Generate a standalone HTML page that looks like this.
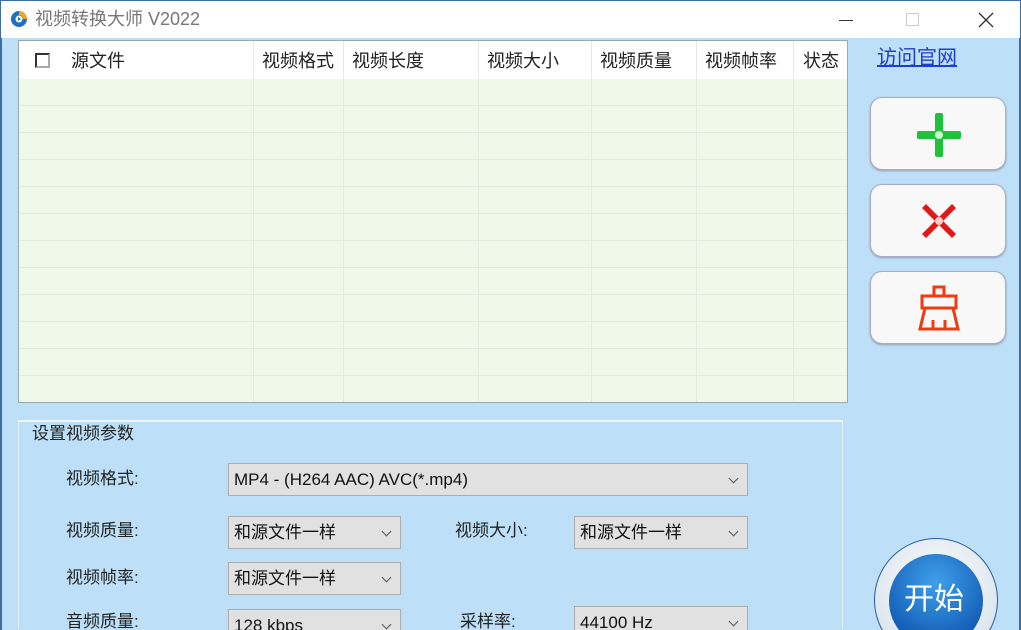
<!DOCTYPE html>
<html><head><meta charset="utf-8"><style>
*{margin:0;padding:0;box-sizing:border-box}
html,body{width:1021px;height:630px;overflow:hidden}
body{background:#bde0f8;font-family:"Liberation Sans","Noto Sans CJK SC",sans-serif;line-height:1.2}
#w{position:relative;width:1021px;height:630px;overflow:hidden}
.a{position:absolute}
.title{left:0;top:0;width:1021px;height:38px;background:#fff;border:1px solid #3a6ea5;border-bottom:none}
.title span{position:absolute;left:34px;top:7px;font-size:18px;color:#777;line-height:22px}
.tbl{left:18px;top:40px;width:830px;height:363px;background:#f0f8e9;border:1px solid #9aa;overflow:hidden}
.hdr{position:absolute;left:0;top:0;width:830px;height:38px;background:#fff;font-size:18px;color:#222;line-height:20px}
.hdr div{position:absolute;top:10px}
.vl{position:absolute;top:0;width:1px;height:363px;background:#e4ece0}
.hl{position:absolute;left:0;width:830px;height:1px;background:#e2ece0}
.btn{left:870px;width:136px;height:73px;background:#f8f8f8;border:1px solid #aac;border-radius:12px;box-shadow:0 1px 2px #99a}
.grp{left:18px;top:420px;width:825px;height:208px;border:1px solid #e6f2fc;border-top:2px solid #eef6fc;border-bottom:none}
.lbl{font-size:17px;color:#222;line-height:20px}
.sel{background:#e1e1e1;border:1px solid #adadad;font-size:17px;color:#111;padding:6px 0 0 5px;height:33px;line-height:20px}
.sel:after{content:"";position:absolute;right:10px;top:11px;width:6px;height:6px;border-right:1px solid #555;border-bottom:1px solid #555;transform:rotate(45deg)}
</style></head><body><div id="w">
<div class="a title">
<svg class="a" style="left:9px;top:9px" width="18" height="18" viewBox="0 0 18 18"><circle cx="9" cy="9" r="8" fill="#1e6fc0"/><path d="M9 1a8 8 0 0 1 8 8h-4a4 4 0 0 0-4-4z" fill="#f5a623"/><circle cx="9" cy="9" r="3.5" fill="#fff"/><path d="M8 7l3 2-3 2z" fill="#1e6fc0"/></svg>
<span>视频转换大师 V2022</span>
<div class="a" style="left:838px;top:19px;width:14px;height:1px;background:#333"></div>
<div class="a" style="left:905px;top:12px;width:13px;height:13px;border:1px solid #ccc"></div>
<svg class="a" style="left:977px;top:11px" width="16" height="16" viewBox="0 0 16 16"><path d="M1 1L15 15M15 1L1 15" stroke="#333" stroke-width="1.3"/></svg>
</div>
<div class="a" style="left:0;top:38px;width:2px;height:592px;background:#3a6ea5"></div>
<div class="a" style="left:1019px;top:38px;width:2px;height:592px;background:#3a6ea5"></div>
<div class="a tbl">
<div class="hl" style="top:64px"></div><div class="hl" style="top:91px"></div><div class="hl" style="top:118px"></div><div class="hl" style="top:145px"></div><div class="hl" style="top:172px"></div><div class="hl" style="top:199px"></div><div class="hl" style="top:226px"></div><div class="hl" style="top:253px"></div><div class="hl" style="top:280px"></div><div class="hl" style="top:307px"></div><div class="hl" style="top:334px"></div>
<div class="vl" style="left:234px"></div><div class="vl" style="left:324px"></div><div class="vl" style="left:459px"></div><div class="vl" style="left:572px"></div><div class="vl" style="left:677px"></div><div class="vl" style="left:774px"></div>
<div class="hdr">
<div style="left:16px;top:12px;width:15px;height:15px;border:2px solid #333;border-right-color:#aaa;border-bottom-color:#aaa"></div>
<div style="left:52px">源文件</div><div style="left:243px">视频格式</div><div style="left:333px">视频长度</div><div style="left:468px">视频大小</div><div style="left:581px">视频质量</div><div style="left:686px">视频帧率</div><div style="left:784px">状态</div>
</div>
<div class="vl" style="left:234px;height:38px;background:#e8e8e8"></div><div class="vl" style="left:324px;height:38px;background:#e8e8e8"></div><div class="vl" style="left:459px;height:38px;background:#e8e8e8"></div><div class="vl" style="left:572px;height:38px;background:#e8e8e8"></div><div class="vl" style="left:677px;height:38px;background:#e8e8e8"></div><div class="vl" style="left:774px;height:38px;background:#e8e8e8"></div>
</div>
<div class="a" style="left:877px;top:46px;font-size:20px;color:#1a3fd0;text-decoration:underline;line-height:24px">访问官网</div>
<div class="a btn" style="top:97px"><svg class="a" style="left:41px;top:10px" width="54" height="54" viewBox="0 0 54 54"><rect x="23" y="5" width="8" height="44" rx="2" fill="#1fc23a"/><rect x="5" y="23" width="44" height="8" rx="2" fill="#1fc23a"/><circle cx="27" cy="27" r="4" fill="#cfc"/></svg></div>
<div class="a btn" style="top:184px"><svg class="a" style="left:45px;top:13px" width="46" height="46" viewBox="0 0 46 46"><path d="M6 10l4-4 13 13 13-13 4 4-13 13 13 13-4 4-13-13-13 13-4-4 13-13z" fill="#e01818"/><circle cx="23" cy="23" r="4" fill="#fcc"/></svg></div>
<div class="a btn" style="top:271px"><svg class="a" style="left:43px;top:12px" width="50" height="50" viewBox="0 0 50 50" fill="none" stroke="#f03a10" stroke-width="3"><rect x="20" y="3" width="10" height="9"/><rect x="8" y="12" width="34" height="12"/><path d="M6 45L11 24h28l5 21z"/><path d="M19 36v9M31 36v9"/></svg></div>
<div class="a grp"></div>
<div class="a lbl" style="left:32px;top:424px;background:#bde0f8;padding-right:4px">设置视频参数</div>
<div class="a lbl" style="left:66px;top:469px">视频格式:</div>
<div class="a sel" style="left:228px;top:463px;width:520px">MP4 - (H264 AAC) AVC(*.mp4)</div>
<div class="a lbl" style="left:66px;top:521px">视频质量:</div>
<div class="a sel" style="left:228px;top:516px;width:173px">和源文件一样</div>
<div class="a lbl" style="left:455px;top:521px">视频大小:</div>
<div class="a sel" style="left:574px;top:516px;width:174px">和源文件一样</div>
<div class="a lbl" style="left:66px;top:568px">视频帧率:</div>
<div class="a sel" style="left:228px;top:562px;width:173px">和源文件一样</div>
<div class="a lbl" style="left:66px;top:612px">音频质量:</div>
<div class="a sel" style="left:228px;top:609px;width:173px;height:21px;border-bottom:none">128 kbps</div>
<div class="a lbl" style="left:460px;top:612px">采样率:</div>
<div class="a sel" style="left:574px;top:606px;width:174px;height:24px;border-bottom:none">44100 Hz</div>
<div class="a" style="left:874px;top:538px;width:124px;height:92px;overflow:hidden"><div style="width:124px;height:124px;border-radius:50%;background:radial-gradient(circle at 50% 40%,#fff,#dde6ee 70%,#8aa 100%);border:1px solid #2a5c9a"></div></div>
<div class="a" style="left:889px;top:554px;width:94px;height:76px;overflow:hidden"><div style="width:94px;height:94px;border-radius:50%;background:radial-gradient(circle at 50% 30%,#3fa0ea,#1560b8 70%,#0c4690)"></div></div>
<div class="a" style="left:904px;top:582px;font-size:30px;color:#fff;line-height:36px">开始</div>
</div></body></html>
